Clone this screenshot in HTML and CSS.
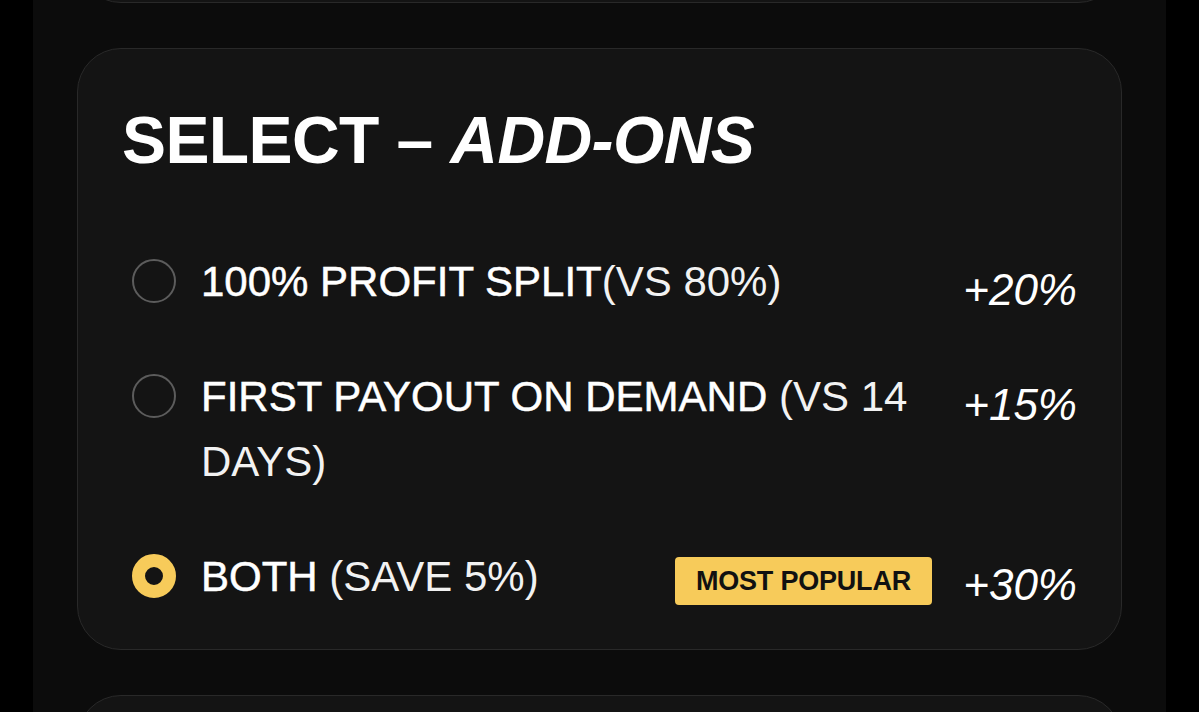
FILE: index.html
```html
<!DOCTYPE html>
<html lang="en">
<head>
<meta charset="utf-8">
<title>Select Add-ons</title>
<link rel="stylesheet" href="styles.css">
</head>
<body>
<div class="panel">
  <div class="card card-prev"></div>
  <section class="card addons">
    <h2 class="title">SELECT – <em>ADD-ONS</em></h2>
    <div class="rows">
      <div class="row">
        <span class="radio"></span>
        <div class="label"><span class="main">100% PROFIT SPLIT</span>(VS 80%)</div>
        <div class="price">+20%</div>
      </div>
      <div class="row">
        <span class="radio"></span>
        <div class="label"><span class="main">FIRST PAYOUT ON DEMAND</span> (VS 14<br>DAYS)</div>
        <div class="price">+15%</div>
      </div>
      <div class="row">
        <span class="radio radio-on"></span>
        <div class="label"><span class="main">BOTH</span> (SAVE 5%)</div>
        <div class="badge">MOST POPULAR</div>
        <div class="price">+30%</div>
      </div>
    </div>
  </section>
  <div class="card card-next"></div>
</div>
</body>
</html>
```

FILE: styles.css
```css
html, body {
  margin: 0;
  height: 712px;
  overflow: hidden;
  background: #000;
}
body {
  font-family: "Liberation Sans", Arial, sans-serif;
  color: #fff;
}
.panel {
  width: 1133px;
  margin: 0 auto;
  height: 100%;
  background: #0c0c0c;
  box-sizing: border-box;
  padding: 0 44px;
  display: flex;
  flex-direction: column;
  gap: 45px;
}
.card {
  background: #141414;
  border: 1.5px solid #292929;
  border-radius: 44px;
  flex-shrink: 0;
}
.card-prev {
  height: 100px;
  margin-top: -99px;
}
.card-next {
  height: 200px;
}
.addons {
  padding: 58px 44px 40px 44px;
}
.title {
  margin: 0;
  font-size: 66px;
  line-height: 66px;
  font-weight: 700;
  letter-spacing: -0.6px;
}
.title em {
  font-style: italic;
}
.rows {
  margin-top: 76px;
  padding-left: 10px;
  display: flex;
  flex-direction: column;
  gap: 50px;
}
.row {
  display: flex;
  align-items: flex-start;
  gap: 25px;
}
.radio {
  width: 44px;
  height: 44px;
  box-sizing: border-box;
  border: 2.5px solid #5c5c5c;
  border-radius: 50%;
  margin-top: 10px;
  flex-shrink: 0;
}
.radio-on {
  border: 13px solid #f7cb5a;
}
.label {
  flex: 1;
  font-size: 42px;
  line-height: 65px;
  color: #f2f2f2;
}
.main {
  color: #fff;
  -webkit-text-stroke: 0.5px #fff;
}
.badge {
  margin-top: 13px;
  height: 48px;
  padding: 0 21px;
  display: flex;
  align-items: center;
  background: #f7cb5a;
  color: #111;
  border-radius: 4px;
  font-size: 27px;
  font-weight: 700;
  letter-spacing: -0.2px;
}
.price {
  width: 120px;
  flex-shrink: 0;
  text-align: right;
  font-size: 44px;
  line-height: 49px;
  font-style: italic;
  padding-top: 16px;
}
```
